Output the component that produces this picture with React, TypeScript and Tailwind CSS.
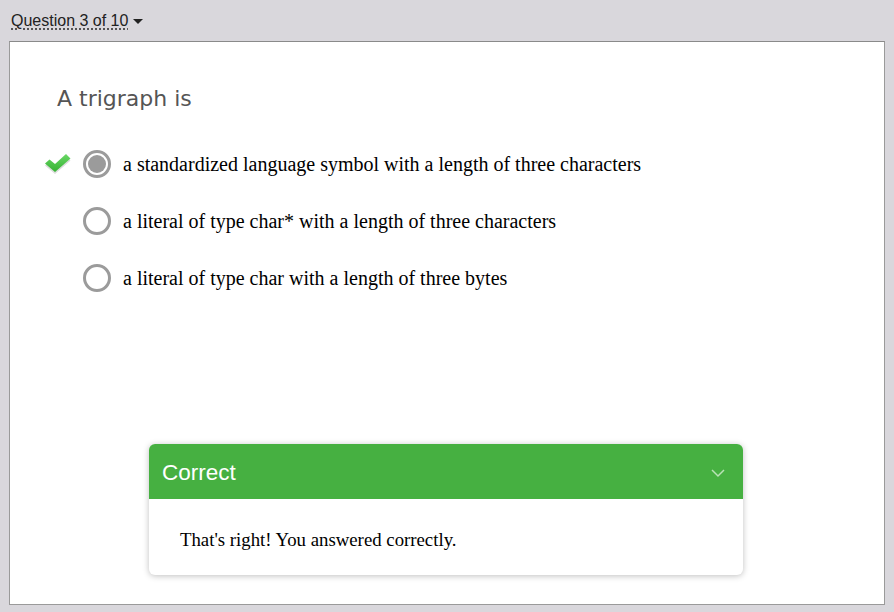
import React from "react";

const options = [
  { text: "a standardized language symbol with a length of three characters", selected: true },
  { text: "a literal of type char* with a length of three characters", selected: false },
  { text: "a literal of type char with a length of three bytes", selected: false },
];

function Check() {
  return (
    <svg width="26" height="20" viewBox="0 0 26 20">
      <defs>
        <linearGradient id="chk" x1="0" y1="0" x2="0" y2="1">
          <stop offset="0" stopColor="#6ad866" />
          <stop offset="1" stopColor="#35b132" />
        </linearGradient>
      </defs>
      <polygon points="0,10.5 4.5,6.5 10,11 21,1 25.5,5.5 10,19" fill="#dcdcdc" transform="translate(0,1)" />
      <polygon points="0,9.5 4.5,5.5 10,10 21,0 25.5,4.5 10,18" fill="url(#chk)" />
    </svg>
  );
}

export default function App() {
  return (
    <div className="w-[894px] h-[612px] bg-[#d9d7dc] flex flex-col" style={{ fontFamily: "'Liberation Sans', Arial, sans-serif" }}>
      {/* top bar */}
      <div className="h-[41px] pl-[11px] flex items-center pt-[1px]">
        <span className="text-[16px] text-[#222] underline decoration-dotted decoration-[#333] underline-offset-[3px]">
          Question 3 of 10
        </span>
        <span className="ml-[5px] w-0 h-0 border-l-[5px] border-r-[5px] border-t-[5px] border-l-transparent border-r-transparent border-t-[#222]" />
      </div>

      {/* panel */}
      <div className="mx-[9px] mb-[7px] flex-1 bg-white border border-[#9a9a9a] border-t-[#8a8a8a] flex flex-col">
        <div className="pl-[47px] pt-[43px] text-[22px] leading-[28px] text-[#555]" style={{ fontFamily: "'DejaVu Sans', Verdana, sans-serif" }}>
          A trigraph is
        </div>

        <div className="mt-[37px] flex flex-col gap-[29px]">
          {options.map((o, i) => (
            <div key={i} className="flex items-center h-[28px]">
              <div className="w-[73px] flex justify-end pr-[12px]">
                {o.selected && <Check />}
              </div>
              <div className="w-[28px] h-[28px] rounded-full border-[3px] border-[#9b9b9b] flex items-center justify-center">
                {o.selected && <div className="w-[18px] h-[18px] rounded-full bg-[#9b9b9b]" />}
              </div>
              <span className="ml-[12px] text-[20px] text-black" style={{ fontFamily: "'Liberation Serif', 'Times New Roman', serif" }}>
                {o.text}
              </span>
            </div>
          ))}
        </div>

        <div className="flex-1" />

        {/* feedback */}
        <div className="ml-[139px] w-[594px] mb-[29px] rounded-[6px] bg-white shadow-[0_1px_6px_rgba(0,0,0,0.25)] overflow-hidden">
          <div className="h-[55px] bg-[#46b041] flex items-center justify-between pl-[13px] pr-[18px] pt-[3px]">
            <span className="text-[22.5px] text-white">Correct</span>
            <svg width="14" height="9" viewBox="0 0 14 9">
              <path d="M1 1 L7 7 L13 1" fill="none" stroke="#b9e2b6" strokeWidth="1.5" />
            </svg>
          </div>
          <div className="h-[76px] pl-[31px] pt-[27px] text-[18.8px] text-black" style={{ fontFamily: "'Liberation Serif', 'Times New Roman', serif" }}>
            That's right! You answered correctly.
          </div>
        </div>
      </div>
    </div>
  );
}
